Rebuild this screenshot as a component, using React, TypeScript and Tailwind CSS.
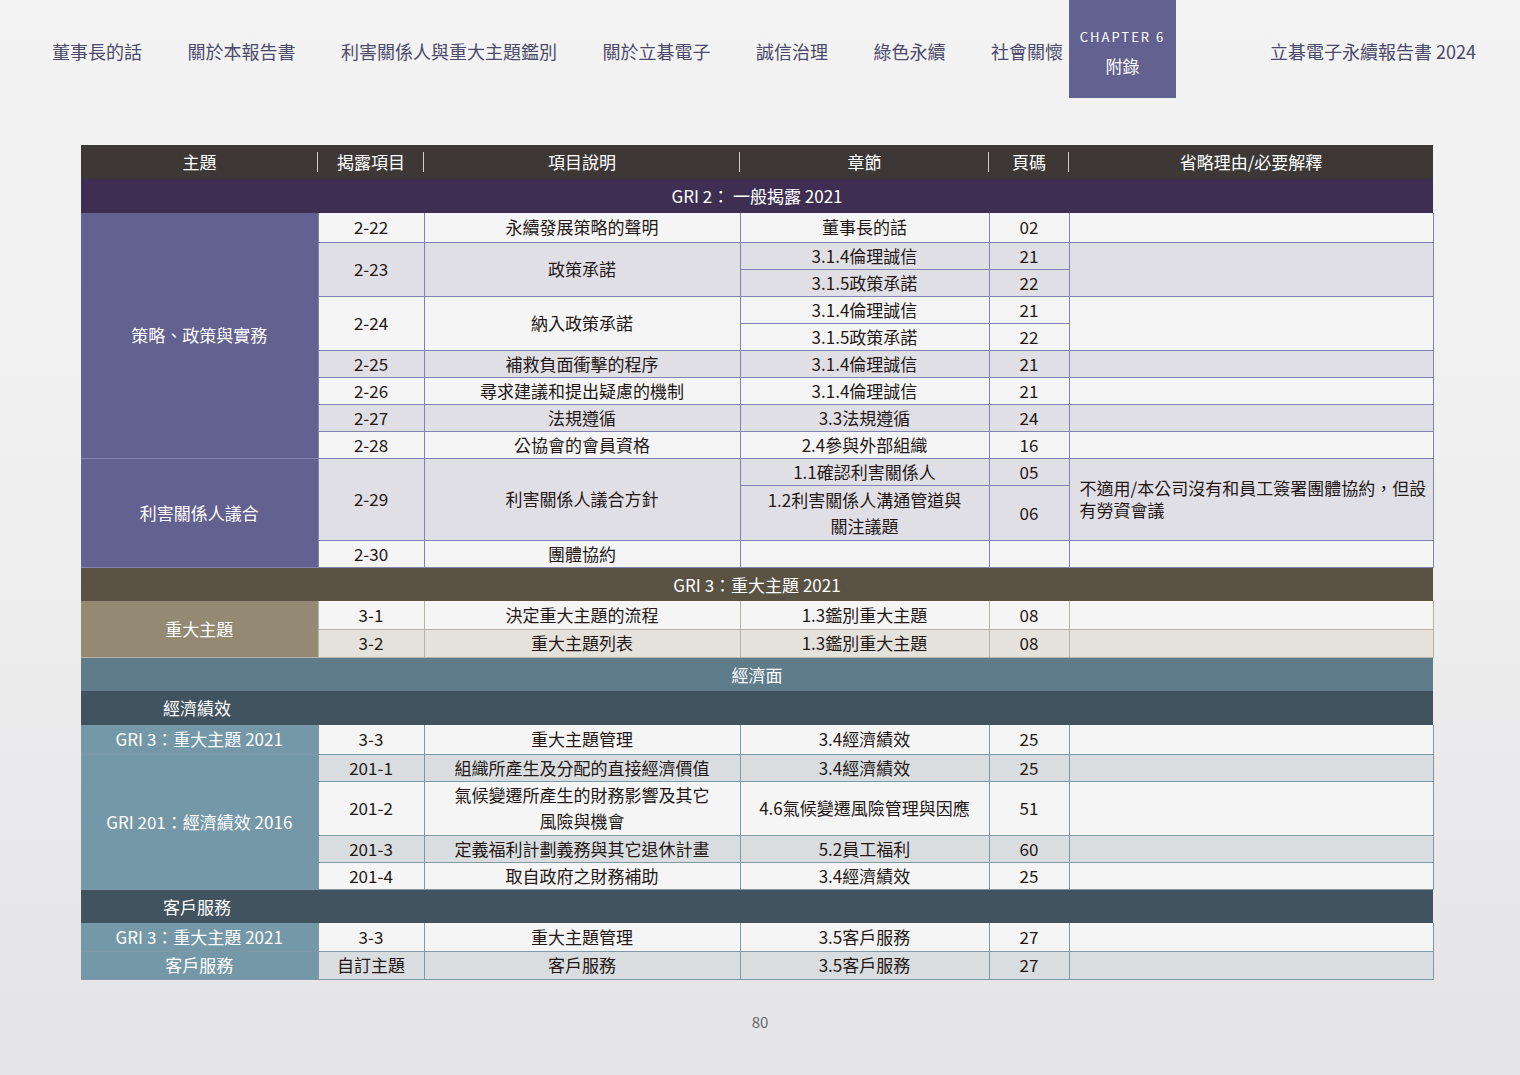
import React from 'react';
const F = { fontFamily: '"Noto Sans CJK TC","Noto Sans",sans-serif' };

type Cell = { t?: React.ReactNode; rs?: number; cls?: string; left?: boolean };

function Td({ c, border, bg }: { c: Cell; border: string; bg: string }) {
  return (
    <td rowSpan={c.rs} className={`${border} ${c.cls ?? bg} border-r border-b ${c.left ? 'text-left pl-2.5 leading-[22px]' : 'text-center leading-[26px]'} text-[17px] text-[#231815] px-1`}>
      {c.t}
    </td>
  );
}

export default function App() {
  const W = 'bg-[#f5f5f6]';
  const G = 'bg-[#e0dfe6]';
  const B1 = 'border-[#8483b0]';
  const B2 = 'border-[#b9b2a4]';
  const B3 = 'border-[#7e98a6]';
  const T = 'bg-[#e5e2dc]';
  const TG = 'bg-[#d9dde0]';
  const band = (t: string, cls: string, left = false) => (
    <tr className="h-[34px]">
      <td colSpan={6} className={`${cls} text-white text-[17px] ${left ? 'text-left pl-[82px]' : 'text-center'}`}>{t}</td>
    </tr>
  );
  const row = (h: string, cells: Cell[], border: string, bg: string) => (
    <tr className={h}>{cells.map((c, i) => <Td key={i} c={c} border={border} bg={bg} />)}</tr>
  );
  const leftP = 'bg-[#62618f] text-white border-[#8483b0]';
  const leftB = 'bg-[#7598a8] text-white';
  return (
    <div style={F} className="w-[1520px] h-[1075px] bg-gradient-to-b from-[#f3f3f3] via-[#efefef] to-[#e4e4e8] relative overflow-hidden">
      <div className="flex items-start h-[98px] text-[18px] text-[#4b4a6b]">
        <div className="flex justify-between ml-[52px] w-[1011px] pt-[38px]">
          <span>董事長的話</span><span>關於本報告書</span><span>利害關係人與重大主題鑑別</span><span>關於立碁電子</span><span>誠信治理</span><span>綠色永續</span><span>社會關懷</span>
        </div>
        <div className="ml-[6px] w-[107px] h-[98px] bg-[#62618f] text-white flex flex-col items-center pt-[27px]">
          <span className="text-[13px] tracking-[2px]">CHAPTER 6</span>
          <span className="text-[17px] mt-[6px]">附錄</span>
        </div>
        <div className="ml-auto pr-[44px] pt-[38px]">立碁電子永續報告書 2024</div>
      </div>
      <div className="pl-[81px] pt-[47px]">
        <table className="table-fixed border-collapse w-[1352px]">
          <colgroup>
            <col className="w-[237px]" /><col className="w-[106px]" /><col className="w-[316px]" /><col className="w-[249px]" /><col className="w-[80px]" /><col className="w-[364px]" />
          </colgroup>
          <tbody>
            <tr className="h-[34px] bg-[#3d3836] text-white text-[17px]">
              {['主題', '揭露項目', '項目說明', '章節', '頁碼', '省略理由/必要解釋'].map((t, i) => (
                <td key={t} className="text-center relative">
                  {t}
                  {i < 5 && <span className="absolute right-0 top-[7px] h-[20px] w-px bg-[#cfcfcf]" />}
                </td>
              ))}
            </tr>
            {band('GRI 2： 一般揭露 2021', 'bg-[#3e2f52]')}
            {row('h-[29px]', [{ t: '策略、政策與實務', rs: 9, cls: leftP }, { t: '2-22' }, { t: '永續發展策略的聲明' }, { t: '董事長的話' }, { t: '02' }, { t: '' }], B1, W)}
            {row('h-[27px]', [{ t: '2-23', rs: 2 }, { t: '政策承諾', rs: 2 }, { t: '3.1.4倫理誠信' }, { t: '21' }, { t: '', rs: 2 }], B1, G)}
            {row('h-[27px]', [{ t: '3.1.5政策承諾' }, { t: '22' }], B1, G)}
            {row('h-[27px]', [{ t: '2-24', rs: 2 }, { t: '納入政策承諾', rs: 2 }, { t: '3.1.4倫理誠信' }, { t: '21' }, { t: '', rs: 2 }], B1, W)}
            {row('h-[27px]', [{ t: '3.1.5政策承諾' }, { t: '22' }], B1, W)}
            {row('h-[27px]', [{ t: '2-25' }, { t: '補救負面衝擊的程序' }, { t: '3.1.4倫理誠信' }, { t: '21' }, { t: '' }], B1, G)}
            {row('h-[27px]', [{ t: '2-26' }, { t: '尋求建議和提出疑慮的機制' }, { t: '3.1.4倫理誠信' }, { t: '21' }, { t: '' }], B1, W)}
            {row('h-[27px]', [{ t: '2-27' }, { t: '法規遵循' }, { t: '3.3法規遵循' }, { t: '24' }, { t: '' }], B1, G)}
            {row('h-[27px]', [{ t: '2-28' }, { t: '公協會的會員資格' }, { t: '2.4參與外部組織' }, { t: '16' }, { t: '' }], B1, W)}
            {row('h-[27px]', [{ t: '利害關係人議合', rs: 3, cls: leftP }, { t: '2-29', rs: 2 }, { t: '利害關係人議合方針', rs: 2 }, { t: '1.1確認利害關係人' }, { t: '05' }, { t: '不適用/本公司沒有和員工簽署團體協約，但設有勞資會議', rs: 2, left: true }], B1, G)}
            {row('h-[55px]', [{ t: <>1.2利害關係人溝通管道與<br />關注議題</> }, { t: '06' }], B1, G)}
            {row('h-[27px]', [{ t: '2-30' }, { t: '團體協約' }, { t: '' }, { t: '' }, { t: '' }], B1, W)}
            {band('GRI 3：重大主題 2021', 'bg-[#5a5242]')}
            {row('h-[28px]', [{ t: '重大主題', rs: 2, cls: 'bg-[#948a74] text-white' }, { t: '3-1' }, { t: '決定重大主題的流程' }, { t: '1.3鑑別重大主題' }, { t: '08' }, { t: '' }], B2, W)}
            {row('h-[28px]', [{ t: '3-2' }, { t: '重大主題列表' }, { t: '1.3鑑別重大主題' }, { t: '08' }, { t: '' }], B2, T)}
            {band('經濟面', 'bg-[#5f7c8b]')}
            {band('經濟績效', 'bg-[#41535f]', true)}
            {row('h-[29px]', [{ t: 'GRI 3：重大主題 2021', cls: leftB }, { t: '3-3' }, { t: '重大主題管理' }, { t: '3.4經濟績效' }, { t: '25' }, { t: '' }], B3, W)}
            {row('h-[27px]', [{ t: 'GRI 201：經濟績效 2016', rs: 4, cls: leftB }, { t: '201-1' }, { t: '組織所產生及分配的直接經濟價值' }, { t: '3.4經濟績效' }, { t: '25' }, { t: '' }], B3, TG)}
            {row('h-[54px]', [{ t: '201-2' }, { t: <>氣候變遷所產生的財務影響及其它<br />風險與機會</> }, { t: '4.6氣候變遷風險管理與因應' }, { t: '51' }, { t: '' }], B3, W)}
            {row('h-[27px]', [{ t: '201-3' }, { t: '定義福利計劃義務與其它退休計畫' }, { t: '5.2員工福利' }, { t: '60' }, { t: '' }], B3, TG)}
            {row('h-[27px]', [{ t: '201-4' }, { t: '取自政府之財務補助' }, { t: '3.4經濟績效' }, { t: '25' }, { t: '' }], B3, W)}
            {band('客戶服務', 'bg-[#41535f]', true)}
            {row('h-[28px]', [{ t: 'GRI 3：重大主題 2021', cls: leftB }, { t: '3-3' }, { t: '重大主題管理' }, { t: '3.5客戶服務' }, { t: '27' }, { t: '' }], B3, W)}
            {row('h-[28px]', [{ t: '客戶服務', cls: leftB }, { t: '自訂主題' }, { t: '客戶服務' }, { t: '3.5客戶服務' }, { t: '27' }, { t: '' }], B3, TG)}
          </tbody>
        </table>
      </div>
      <div className="absolute left-0 right-0 top-[1011px] text-center text-[15px] text-[#666]">80</div>
    </div>
  );
}
